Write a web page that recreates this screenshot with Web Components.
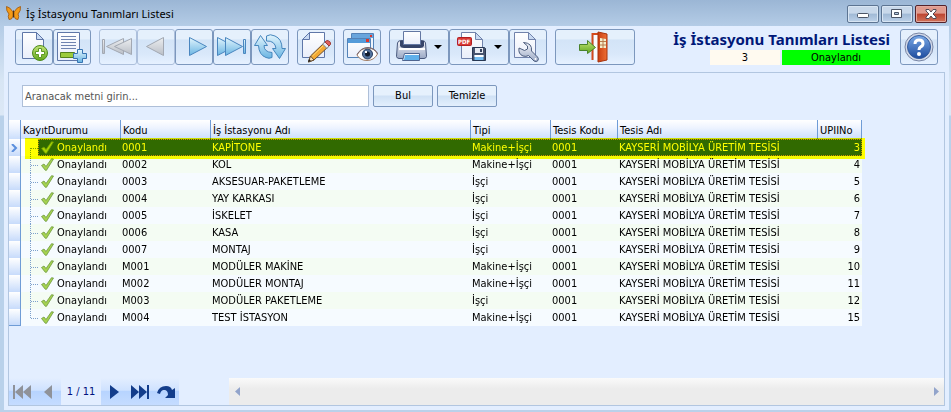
<!DOCTYPE html>
<html lang="tr">
<head>
<meta charset="utf-8">
<title>İş İstasyonu Tanımları Listesi</title>
<style>
    html, body {
        height: 100%;
        margin: 0;
    }

    body {
        font: 11px/16px "DejaVu Sans Condensed", "DejaVu Sans", sans-serif;
        color: #000;
    }
</style>
</head>
<body>

<app-window caption="İş İstasyonu Tanımları Listesi">
    <tool-bar slot="toolbar">
        <tool-group>
            <tool-button icon="new" label="Yeni"></tool-button>
            <tool-button icon="addline" label="Satır ekle"></tool-button>
        </tool-group>
        <tool-group>
            <tool-button icon="first" label="İlk" disabled></tool-button>
            <tool-button icon="prev" label="Önceki" disabled></tool-button>
            <tool-button icon="next" label="Sonraki"></tool-button>
            <tool-button icon="last" label="Son"></tool-button>
            <tool-button icon="refresh" label="Yenile"></tool-button>
        </tool-group>
        <tool-button icon="edit" label="Düzenle"></tool-button>
        <tool-button icon="preview" label="Önizle"></tool-button>
        <tool-group>
            <tool-button icon="print" label="Yazdır" menu></tool-button>
            <tool-button icon="pdf" label="Farklı kaydet" menu></tool-button>
            <tool-button icon="tools" label="Ayarlar"></tool-button>
        </tool-group>
        <tool-button icon="exit" label="Çıkış" wide></tool-button>
        <record-status slot="end" number="3" state="Onaylandı">İş İstasyonu Tanımları Listesi</record-status>
        <tool-button slot="end" icon="help" label="Yardım"></tool-button>
    </tool-bar>

    <search-box placeholder="Aranacak metni girin..."></search-box>
    <data-grid></data-grid>
    <record-navigator position="1" total="11"></record-navigator>
</app-window>

<script>

const GRADIENTS = `
    <defs>
        <linearGradient id="blue" x1="0" y1="0" x2="0" y2="1">
            <stop offset="0" stop-color="#e2f5fd"/><stop offset="1" stop-color="#69b4e2"/>
        </linearGradient>
        <linearGradient id="gray" x1="0" y1="0" x2="0" y2="1">
            <stop offset="0" stop-color="#eceef0"/><stop offset="1" stop-color="#b9bec6"/>
        </linearGradient>
        <linearGradient id="green" x1="0" y1="0" x2="0" y2="1">
            <stop offset="0" stop-color="#c4e47a"/><stop offset="1" stop-color="#62a81c"/>
        </linearGradient>
        <linearGradient id="paper" x1="0" y1="0" x2="0" y2="1">
            <stop offset="0" stop-color="#ffffff"/><stop offset="1" stop-color="#e9eefa"/>
        </linearGradient>
        <linearGradient id="steel" x1="0" y1="0" x2="0" y2="1">
            <stop offset="0" stop-color="#f4f6fb"/><stop offset="1" stop-color="#9aa8c4"/>
        </linearGradient>
        <linearGradient id="ball" x1="0" y1="0" x2="0" y2="1">
            <stop offset="0" stop-color="#7aa9e6"/><stop offset="1" stop-color="#1d4b9e"/>
        </linearGradient>
        <linearGradient id="door" x1="0" y1="0" x2="1" y2="0">
            <stop offset="0" stop-color="#c93f12"/><stop offset="1" stop-color="#ee6f35"/>
        </linearGradient>
    </defs>`;

const ICONS = {
    new: `
        <path d="M4.500 1.500H18.500L25.500 8.500V27.500H4.500Z" fill="url(#paper)" stroke="#5f77a8"/>
        <path d="M18.500 1.500V8.500H25.500Z" fill="#c9daf2" stroke="#5f77a8"/>
        <circle cx="22" cy="22" r="7.500" fill="url(#green)" stroke="#4c8a1c"/>
        <path d="M20.500 17.500h3v3h3v3h-3v3h-3v-3h-3v-3h3z" fill="#fff" stroke="#5c9a24"/>`,
    addline: `
        <path d="M1.500 1.500H23.500V29.500H1.500Z" fill="url(#paper)" stroke="#5f77a8"/>
        <path d="M5 5.500H20M5 8.500H20M5 11.500H20M5 14.500H20M5 17.500H20" stroke="#7084b0"/>
        <path d="M4.500 21.500H18.500V26.500H4.500Z" fill="#9ccb3c" stroke="#55811d"/>
        <path d="M21.500 18.500h5v4h4v5h-4v4h-5v-4h-4v-5h4z" fill="url(#blue)" stroke="#3774b2"/>`,
    first: `
        <path d="M.500 8.500h2v14h-2z" fill="url(#gray)" stroke="#a2a8b2"/>
        <path d="M21.500 7.500V23.500L4.500 15.500Z" fill="url(#gray)" stroke="#a2a8b2"/>
        <path d="M29.500 7.500V23.500L12.500 15.500Z" fill="url(#gray)" stroke="#a2a8b2"/>`,
    prev: `<path d="M23.500 6.500V24.500L6.500 15.500Z" fill="url(#gray)" stroke="#a2a8b2"/>`,
    next: `<path d="M11.500 6.500V24.500L28.500 15.500Z" fill="url(#blue)" stroke="#4a86bf"/>`,
    last: `
        <path d="M1.500 6.500V24.500L18.500 15.500Z" fill="url(#blue)" stroke="#4a86bf"/>
        <path d="M9.500 6.500V24.500L26.500 15.500Z" fill="url(#blue)" stroke="#4a86bf"/>
        <path d="M27.500 8.500h2v14h-2z" fill="url(#blue)" stroke="#4a86bf"/>`,
    refresh: `
        <path d="M6.500 4.500L.500 14.500H4.500Q5 24 12 26.500Q15 28 18 26.500V21.500Q10 21 10 14.500H13.500Z" fill="url(#blue)" stroke="#4586bd"/>
        <path d="M25.500 27.500L31.500 17.500H28Q28 8 21 5Q16 2.500 12.500 5V10Q21 9.500 22 17.500H18.500Z" fill="url(#blue)" stroke="#4586bd"/>`,
    edit: `
        <path d="M9.500 1.500H24.500V26.500H2.500V8.500Z" fill="url(#paper)" stroke="#5f77a8"/>
        <path d="M9.500 1.500V8.500H2.500Z" fill="#c9daf2" stroke="#5f77a8"/>
        <path d="M8.500 31L10.500 25L25 11L29 15L14 29Z" fill="#f3a934" stroke="#674d32"/>
        <path d="M12.500 25L25 13" stroke="#ffda76"/>
        <path d="M8.500 31L10.500 25L14 29Z" fill="#f8dfb5" stroke="#674d32"/>
        <path d="M8 31L9 28L11 30Z" fill="#222"/>
        <path d="M22.500 13L25 11L29 15L27 17.500Z" fill="#e5ebf3" stroke="#7d8390"/>
        <path d="M25 11L27 9.500Q31 10 30.500 13.500L29 15Z" fill="#e0605c" stroke="#9e3a36"/>`,
    preview: `
        <path d="M5.500 2.500H27.500V22.500H5.500Z" fill="#eef4fc" stroke="#5382b8"/>
        <path d="M6 3H27V7H6Z" fill="#68a5dd"/><path d="M24 4h2v2h-2z" fill="#e0362a"/>
        <path d="M1.500 7.500H24.500V26.500H1.500Z" fill="url(#paper)" stroke="#5382b8"/>
        <path d="M2 8H24V12H2Z" fill="#559bd9"/><path d="M20 8h3v3h-3z" fill="#e0362a"/>
        <path d="M11 24Q15 17 22 17Q28 17 31.500 23Q28 29.500 21 29.500Q14 29.500 11 24Z" fill="#fff" stroke="#a27d64"/>
        <path d="M11 23.500Q15 16.500 22 16.500Q29 17 32 23" fill="none" stroke="#746571"/>
        <circle cx="21.500" cy="23" r="5" fill="#54749e" stroke="#253c60"/>
        <circle cx="21.500" cy="23" r="2.500" fill="#111c2f"/>
        <path d="M19 20h2v2h-2z" fill="#fff"/>`,
    print: `
        <path d="M1.500 12Q2 9.500 5 9.500H26Q29 9.500 29.500 12L30.500 25.500Q30 27.500 28 27.500H3Q1 27.500.500 25.500Z" fill="url(#steel)" stroke="#48587c"/>
        <path d="M4 10H28V15Q27 17 24 17H8Q5 17 4 15Z" fill="#36456a"/>
        <path d="M7.500.500H24.500V13.500H7.500Z" fill="url(#paper)" stroke="#6377a2"/>
        <path d="M3 18H29" stroke="#fff" stroke-width="2"/>
        <path d="M8.500 22.500H23.500V29.500H6.500Z" fill="#f7fbff" stroke="#4f6590"/>
        <path d="M9 24H23V29H8Z" fill="#60b0ea"/>`,
    pdf: `
        <path d="M5.500 1.500H19.500L26.500 8.500V27.500H5.500Z" fill="url(#paper)" stroke="#7183ac"/>
        <path d="M19.500 1.500V8.500H26.500Z" fill="#c9daf2" stroke="#7183ac"/>
        <rect x="1.500" y="6.500" width="14" height="8" rx="1" fill="#d83a35" stroke="#b21e21"/>
        <text x="2" y="13" font-family="DejaVu Sans Condensed" font-size="6" font-weight="bold" fill="#fff">PDF</text>
        <path d="M16.500 16.500H28.500L29.500 17.500V29.500H16.500Z" fill="#46536e" stroke="#273753"/>
        <path d="M19 17h8v5h-8z" fill="#e6eaf2"/><path d="M24 18h2v3h-2z" fill="#33415e"/>
        <path d="M18.500 24h9v5h-9z" fill="#73bcf1"/><path d="M18.500 24h9v2h-9z" fill="#fff"/>`,
    tools: `
        <path d="M2.500 1.500H16.500L23.500 8.500V26.500H2.500Z" fill="url(#paper)" stroke="#7183ac"/>
        <path d="M16.500 1.500V8.500H23.500Z" fill="#c9daf2" stroke="#7183ac"/>
        <path d="M11.500 11.500L15.500 15V18L12.500 19.500L7 17Q6 23 11 25Q14 26 16.500 24.500L22 30Q24.500 31.500 26 29.500Q27 27.500 25.500 26L19.500 20Q20.500 12 11.500 11.500Z" fill="url(#steel)" stroke="#4c5d7e"/>
        <circle cx="23.500" cy="28" r="1" fill="#fff"/>`,
    exit: `
        <path d="M13.500 29V3H20" fill="none" stroke="#d34a1c" stroke-width="2"/>
        <path d="M15 4H20V29H15Z" fill="#f9fcff"/>
        <path d="M19 1L28 3V29L19 31Z" fill="url(#door)" stroke="#a6330d" stroke-width="1"/>
        <path d="M21 7L27 8V17L21 17Z" fill="#f6eecb"/>
        <path d="M24 7V17M21 10.500H27M21 14H27" stroke="#b77a4b"/>
        <path d="M.500 13.500H8.500V9.500L16.500 16.500L8.500 22.500V19.500H.500Z" fill="url(#green)" stroke="#49832a"/>`,
    help: `
        <circle cx="16" cy="16" r="14" fill="#d2d9e8" stroke="#7885a4"/>
        <circle cx="16" cy="16" r="11.500" fill="url(#ball)" stroke="#345b9d"/>
        <path d="M12 13Q12 9 16 9Q20 9 20 12.500Q20 15 17.500 16Q16 17 16 19" fill="none" stroke="#fff" stroke-width="3"/>
        <circle cx="16" cy="23" r="2" fill="#fff"/>`
};


if (!customElements.get('app-window'))
    window.customElements.define("app-window",
    class extends HTMLElement {

    constructor() {
        super();
        this.attachShadow({ mode: 'open' });
    }

    connectedCallback() {
        const caption = this.getAttribute("caption");
        this.shadowRoot.innerHTML = `
            <style>
                :host {
                    box-sizing: border-box;
                    display: flex;
                    flex-direction: column;
                    min-height: 100%;
                    padding: 0 2px 2px 4px;
                    background: linear-gradient(#9bb6d5, #b4cce6 26px, #d7e5f4 80px, #dce8f6 115px, #b9d1ea 116px);
                }

                header {
                    display: flex;
                    align-items: center;
                    gap: 5px;
                    height: 26px;
                    padding: 0 2px;
                }

                h1 {
                    flex: 1;
                    margin: 2px 0 0;
                    font: 11px/20px "Noto Sans", sans-serif;
                }

                .controls {
                    display: flex;
                    gap: 2px;
                }

                .controls button {
                    display: flex;
                    align-items: center;
                    justify-content: center;
                    width: 32px;
                    height: 18px;
                    margin: 1px 0 0;
                    padding: 0;
                    border: 1px solid #5c7492;
                    border-radius: 2px;
                    background: linear-gradient(#c8d8ea 45%, #a0b9d5 50%, #bdd2e9);
                    box-shadow: inset 0 0 0 1px #d8e5f3;
                }

                .controls .close {
                    border-color: #54222a;
                    background: linear-gradient(#e09a8d 45%, #bd4531 50%, #d17259);
                    box-shadow: inset 0 0 0 1px #e2a89e;
                }

                main {
                    flex: 1;
                    display: flex;
                    flex-direction: column;
                    padding: 3px 4px 4px;
                    background: #e3eeff;
                }

                section {
                    flex: 1;
                    display: flex;
                    flex-direction: column;
                    margin-top: 7px;
                    border: 1px solid #b2c6e0;
                }
            </style>
            <header>
                <svg width="15" height="15" viewBox="0 0 15 15">
                    <path d="M7 6Q4 1 .5 .5Q0 5 3 8Q1.500 10 3 13.500Q6 14 7 10Z" fill="#f39a17" stroke="#9a5510" stroke-width=".8"/>
                    <path d="M8 6Q11 1 14.500 .5Q15 5 12 8Q13.500 10 12 13.500Q9 14 8 10Z" fill="#f39a17" stroke="#9a5510" stroke-width=".8"/>
                    <path d="M7.500 4.500V11.500" stroke="#4a3012"/>
                </svg>
                <h1>${caption}</h1>
                <div class="controls">
                    <button aria-label="Simge durumuna küçült"><svg width="12" height="10"><rect x=".5" y="4.500" width="11" height="4" rx="1" fill="#fff" stroke="#4b5566"/></svg></button>
                    <button aria-label="Ekranı kapla"><svg width="12" height="10"><path d="M.5.500H10.500V8.500H.500Z" fill="#fff" stroke="#4b5566"/><path d="M3.500 3.500h4v2h-4z" fill="#b4c9e0" stroke="#4b5566"/></svg></button>
                    <button class="close" aria-label="Kapat"><svg width="12" height="10"><path d="M1 .500H4L6 3L8 .500H11V2L8 5L11 8V9.500H8L6 7L4 9.500H1V8L4 5L1 2Z" fill="#fff" stroke="#524a55"/></svg></button>
                </div>
            </header>
            <main>
                <slot name="toolbar"></slot>
                <section><slot></slot></section>
            </main>
        `;
    }

});


if (!customElements.get('tool-bar'))
    window.customElements.define("tool-bar",
    class extends HTMLElement {

    constructor() {
        super();
        this.attachShadow({ mode: 'open' });
    }

    connectedCallback() {
        this.shadowRoot.innerHTML = `
            <style>
                :host {
                    display: flex;
                    justify-content: space-between;
                    padding: 0 7px;
                }

                div {
                    display: flex;
                    gap: 8px;
                }

                .end {
                    gap: 10px;
                }
            </style>
            <div><slot></slot></div>
            <div class="end"><slot name="end"></slot></div>
        `;
    }

});


if (!customElements.get('tool-group'))
    window.customElements.define("tool-group",
    class extends HTMLElement {

    constructor() {
        super();
        this.attachShadow({ mode: 'open' });
    }

    connectedCallback() {
        this.shadowRoot.innerHTML = `
            <style>
                :host {
                    display: flex;
                }
            </style>
            <slot></slot>
        `;
    }

});


if (!customElements.get('tool-button'))
    window.customElements.define("tool-button",
    class extends HTMLElement {

    constructor() {
        super();
        this.attachShadow({ mode: 'open' });
    }

    connectedCallback() {
        const label = this.getAttribute("label");
        const icon = ICONS[this.getAttribute("icon")] || "";
        const disabled = this.hasAttribute("disabled") ? "disabled" : "";
        const arrow = this.hasAttribute("menu")
            ? `<svg width="8" height="5"><path d="M0 0H8L4 4Z"/></svg>`
            : "";

        this.shadowRoot.innerHTML = `
            <style>
                :host {
                    display: block;
                }

                button {
                    display: flex;
                    align-items: center;
                    justify-content: center;
                    gap: 6px;
                    width: 38px;
                    height: 36px;
                    margin: 0;
                    padding: 0;
                    border: 1px solid #7c97bd;
                    border-radius: 3px;
                    background: linear-gradient(#e5f0fc 25%, #d3e4f7 30%, #d9e8fa 70%, #e6f1ff);
                }

                button:disabled {
                    border-color: #adc0dc;
                }

                :host([menu]) button {
                    width: 60px;
                }

                :host([wide]) button {
                    width: 80px;
                }
            </style>
            <button aria-label="${label}" title="${label}" ${disabled}>
                <svg width="32" height="32" viewBox="0 0 32 32">${GRADIENTS}${icon}</svg>
                ${arrow}
            </button>
        `;
    }

});


if (!customElements.get('record-status'))
    window.customElements.define("record-status",
    class extends HTMLElement {

    constructor() {
        super();
        this.attachShadow({ mode: 'open' });
    }

    connectedCallback() {
        this.shadowRoot.innerHTML = `
            <style>
                :host {
                    display: flex;
                    flex-direction: column;
                    align-items: flex-end;
                    text-align: center;
                }

                h2 {
                    margin: 0;
                    font: bold 15px/21px "Noto Sans", sans-serif;
                    color: #001878;
                }

                div {
                    display: flex;
                    gap: 2px;
                    line-height: 15px;
                }

                .number {
                    width: 70px;
                    background: #fffaf0;
                }

                .state {
                    width: 108px;
                    background: #00ff00;
                }
            </style>
            <h2><slot></slot></h2>
            <div>
                <span class="number">${this.getAttribute("number")}</span>
                <span class="state">${this.getAttribute("state")}</span>
            </div>
        `;
    }

});


if (!customElements.get('search-box'))
    window.customElements.define("search-box",
    class extends HTMLElement {

    constructor() {
        super();
        this.attachShadow({ mode: 'open' });
    }

    connectedCallback() {
        const placeholder = this.getAttribute("placeholder");
        this.shadowRoot.innerHTML = `
            <style>
                :host {
                    display: block;
                    padding: 12px 13px 13px;
                }

                form {
                    display: flex;
                    align-items: center;
                    gap: 4px;
                }

                input {
                    box-sizing: border-box;
                    width: 347px;
                    height: 22px;
                    margin: 0;
                    padding: 0 2px;
                    border: 1px solid #aebfd8;
                    font: inherit;
                    background: #fff;
                }

                input::placeholder {
                    color: #555;
                }

                button {
                    width: 60px;
                    height: 22px;
                    padding: 0;
                    border: 1px solid #7c97bd;
                    border-radius: 2px;
                    font: inherit;
                    background: linear-gradient(#e6f1fd 45%, #cfe1f5 50%, #e3effd);
                }
            </style>
            <form>
                <input type="text" aria-label="${placeholder}" placeholder="${placeholder}">
                <button type="button">Bul</button>
                <button type="button">Temizle</button>
            </form>
        `;

        this.input = this.shadowRoot.querySelector("input");
        this.shadowRoot.querySelectorAll("button")[1].onclick = () => this.input.value = "";
    }

});


if (!customElements.get('data-grid'))
    window.customElements.define("data-grid",
    class extends HTMLElement {

    constructor() {
        super();
        this.attachShadow({ mode: 'open' });
        this.filas = [
            ["0001", "KAPİTONE", "Makine+İşçi", 3],
            ["0002", "KOL", "Makine+İşçi", 4],
            ["0003", "AKSESUAR-PAKETLEME", "İşçi", 5],
            ["0004", "YAY KARKASI", "İşçi", 6],
            ["0005", "İSKELET", "İşçi", 7],
            ["0006", "KASA", "İşçi", 8],
            ["0007", "MONTAJ", "İşçi", 9],
            ["M001", "MODÜLER MAKİNE", "Makine+İşçi", 10],
            ["M002", "MODÜLER MONTAJ", "Makine+İşçi", 11],
            ["M003", "MODÜLER PAKETLEME", "İşçi", 12],
            ["M004", "TEST İSTASYON", "Makine+İşçi", 15]
        ];
    }

    connectedCallback() {
        this.shadowRoot.innerHTML = `
            <style>
                :host {
                    display: block;
                    flex: 1;
                    isolation: isolate;
                }

                table {
                    table-layout: fixed;
                    width: 853px;
                    border-collapse: separate;
                    border-spacing: 0;
                }

                th {
                    padding: 1px 0 0 2px;
                    border-right: 1px solid #6f9cd6;
                    font-weight: normal;
                    line-height: 17px;
                    text-align: left;
                    box-sizing: border-box;
                    background: linear-gradient(#fff, #eef4ff 40%, #cbdefc);
                }

                thead th {
                    height: 19px;
                }

                td {
                    height: 17px;
                    padding: 0 0 0 1px;
                    line-height: 17px;
                    box-sizing: border-box;
                    white-space: nowrap;
                }

                tbody th {
                    height: 17px;
                    padding: 0;
                    background: linear-gradient(#fff, #c7dbfb);
                }

                tbody th svg {
                    display: block;
                    margin: auto;
                }

                tbody tr:last-child th {
                    border-bottom: 1px solid #6f9cd6;
                }

                .number {
                    padding-right: 2px;
                    text-align: right;
                }

                tbody tr {
                    background: #f6fbff;
                }

                tbody tr:nth-child(even) {
                    background: #f4fcf3;
                }

                .state {
                    display: flex;
                    align-items: center;
                    padding-left: 8px;
                }

                .state svg {
                    margin-right: 3px;
                }

                .state .tree {
                    margin: 0;
                    width: 11px;
                }

                /* highlighter stroke over the focused row */
                .selected {
                    position: relative;
                    color: #fff;
                }

                .selected td {
                    background: #316ac5;
                }

                .selected td:nth-child(2) {
                    background: linear-gradient(90deg, #fff 17px, #316ac5 17px);
                }

                .selected .number::before {
                    content: "";
                    position: absolute;
                    z-index: 1;
                    inset: 0 0 0 29px;
                    border: 1px dotted #ce953a;
                }

                .selected .number::after {
                    content: "";
                    position: absolute;
                    z-index: 2;
                    inset: -1px -3px -3px 16px;
                    background: #ff0;
                    mix-blend-mode: multiply;
                }
            </style>
            <table>
                <colgroup>
                    <col style="width: 12px"><col style="width: 100px"><col style="width: 90px">
                    <col style="width: 260px"><col style="width: 80px"><col style="width: 67px">
                    <col style="width: 200px"><col style="width: 44px">
                </colgroup>
                <thead>
                    <tr>
                        <th></th><th>KayıtDurumu</th><th>Kodu</th><th>İş İstasyonu Adı</th>
                        <th>Tipi</th><th>Tesis Kodu</th><th>Tesis Adı</th><th>UPIINo</th>
                    </tr>
                </thead>
                <tbody>${this.filas.map((fila, i) => this.crearFila(fila, i)).join("")}</tbody>
            </table>
        `;
    }

    crearFila([kodu, adi, tipi, no], i) {
        const primera = i === 0;
        const ultima = i === this.filas.length - 1;
        const desde = primera ? 9 : 0;
        const hasta = ultima ? 9 : 17;
        const marca = primera
            ? `<svg width="7" height="8"><path d="M1 0L5 4L1 8" fill="none" stroke="#5b8fdd" stroke-width="2"/></svg>`
            : "";

        return `
            <tr class="${primera ? "selected" : ""}">
                <th scope="row">${marca}</th>
                <td>
                    <div class="state">
                        <svg class="tree" height="17"><path d="M.5 ${desde}V${hasta}M1 9.500H9" stroke="#7da0cc" stroke-dasharray="1"/></svg>
                        <svg width="13" height="13" viewBox="0 0 13 13"><path d="M.5 7.500L3 6L5 8.500L10.500.700L12.500 1L5.500 12.300H4.300Z" fill="#a5d24f" stroke="#6d9840" stroke-width=".8"/></svg>
                        Onaylandı
                    </div>
                </td>
                <td>${kodu}</td><td>${adi}</td><td>${tipi}</td><td>0001</td>
                <td>KAYSERİ MOBİLYA ÜRETİM TESİSİ</td><td class="number">${no}</td>
            </tr>`;
    }

});


if (!customElements.get('record-navigator'))
    window.customElements.define("record-navigator",
    class extends HTMLElement {

    constructor() {
        super();
        this.attachShadow({ mode: 'open' });
    }

    connectedCallback() {
        this.shadowRoot.innerHTML = `
            <style>
                :host {
                    display: flex;
                    height: 27px;
                    color: #00137f;
                }

                button {
                    display: flex;
                    align-items: center;
                    justify-content: center;
                    width: 26px;
                    height: 27px;
                    margin: 0;
                    padding: 0;
                    border: 0;
                    background: linear-gradient(#e3eeff, #cfe2ff 45%, #b7d4ff 50%, #c5dcff);
                    fill: #133d8b;
                }

                button:disabled {
                    fill: #8f9299;
                }

                output {
                    width: 40px;
                    line-height: 27px;
                    text-align: center;
                }

                .scroll {
                    flex: 1;
                    display: flex;
                    justify-content: space-between;
                    margin-left: 50px;
                    background: linear-gradient(#fafafa, #ececec 40%);
                }

                .scroll button {
                    width: 16px;
                    background: none;
                    fill: #92a4cb;
                }
            </style>
            <button aria-label="İlk kayıt" disabled><svg width="18" height="14"><path d="M0 0H2V14H0ZM10 0V14L2 7ZM18 0V14L10 7Z"/></svg></button>
            <button aria-label="Önceki kayıt" disabled><svg width="8" height="14"><path d="M8 0V14L0 7Z"/></svg></button>
            <output>${this.getAttribute("position")} / ${this.getAttribute("total")}</output>
            <button aria-label="Sonraki kayıt"><svg width="9" height="14"><path d="M0 0V14L9 7Z"/></svg></button>
            <button aria-label="Son kayıt"><svg width="18" height="14"><path d="M18 0H16V14H18ZM8 0V14L16 7ZM0 0V14L8 7Z"/></svg></button>
            <button aria-label="Yenile"><svg width="18" height="14"><path d="M0 8Q2 1 9 1Q14 1 15 5L18 3V13H8L11 10Q11 5 7 5Q4 5 3 9Z"/></svg></button>
            <div class="scroll">
                <button aria-label="Sola kaydır"><svg width="5" height="9"><path d="M5 0V9L0 4.500Z"/></svg></button>
                <button aria-label="Sağa kaydır"><svg width="5" height="9"><path d="M0 0V9L5 4.500Z"/></svg></button>
            </div>
        `;
    }

});

</script>
</body>
</html>
